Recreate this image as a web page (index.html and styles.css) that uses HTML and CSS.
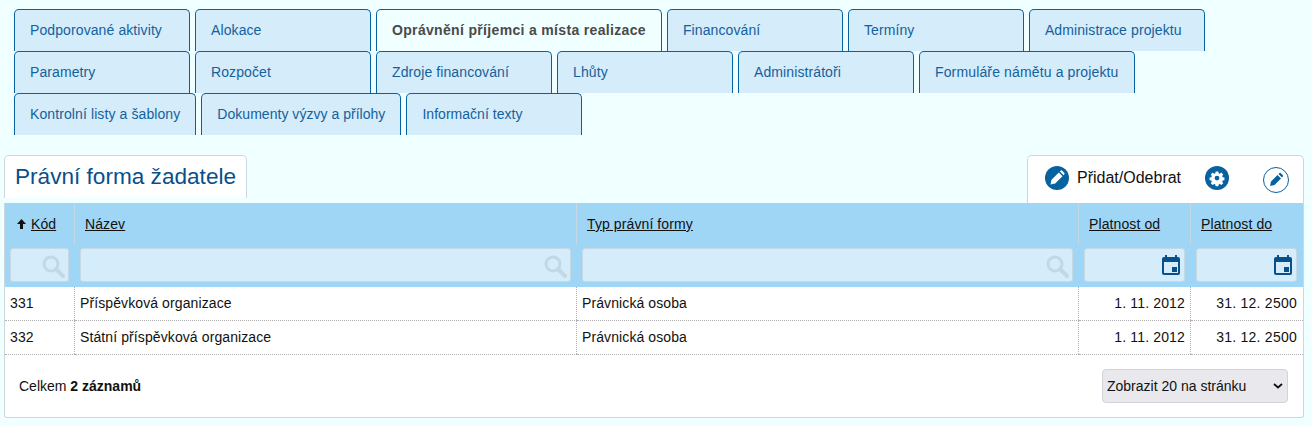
FILE: index.html
```html
<!DOCTYPE html>
<html lang="cs">
<head>
  <meta charset="UTF-8">
  <meta name="viewport" content="width=device-width, initial-scale=1.0">
  <title>Oprávnění příjemci a místa realizace</title>
  <link rel="stylesheet" href="styles.css">
</head>
<body>
  <nav class="tabs">
    <a class="tab">Podporované aktivity</a>
    <a class="tab">Alokace</a>
    <a class="tab active">Oprávnění příjemci a místa realizace</a>
    <a class="tab">Financování</a>
    <a class="tab">Termíny</a>
    <a class="tab">Administrace projektu</a>
    <a class="tab">Parametry</a>
    <a class="tab">Rozpočet</a>
    <a class="tab">Zdroje financování</a>
    <a class="tab">Lhůty</a>
    <a class="tab">Administrátoři</a>
    <a class="tab tab-wide">Formuláře námětu a projektu</a>
    <a class="tab">Kontrolní listy a šablony</a>
    <a class="tab tab-tight">Dokumenty výzvy a přílohy</a>
    <a class="tab tab-tight">Informační texty</a>
  </nav>

  <section class="panel">
    <div class="panel-top">
      <h2 class="panel-title">Právní forma žadatele</h2>
      <div class="toolbar">
        <span class="tool-add">
          <svg class="icon-round" viewBox="0 0 24 24" width="24" height="24">
            <circle cx="12" cy="12" r="12" fill="#08629f"/>
            <path d="M5.500 18.500l1-4.700 7.300-7.300 3.700 3.700-7.300 7.300zM14.800 5.500l.7-.7a1.200 1.200 0 0 1 1.700 0l2 2a1.200 1.200 0 0 1 0 1.700l-.7.7z" fill="#fff"/>
          </svg>
          Přidat/Odebrat
        </span>
        <svg class="icon-gear" viewBox="0 0 24 24" width="24" height="24">
          <circle cx="12" cy="12" r="12" fill="#08629f"/>
          <path fill="#fff" fill-rule="evenodd" d="M10.300 4.500h3.400l.4 2.200 1.400.6 1.900-1.300 2.400 2.400-1.300 1.900.6 1.400 2.200.4v3.400l-2.200.4-.6 1.400 1.300 1.900-2.400 2.400-1.900-1.300-1.400.6-.4 2.200h-3.400l-.4-2.200-1.400-.6-1.900 1.300-2.400-2.400 1.300-1.900-.6-1.400-2.200-.4v-3.400l2.200-.4.6-1.400-1.300-1.900 2.400-2.400 1.900 1.300 1.400-.6zM12 9.800a3 3 0 1 0 0 6 3 3 0 0 0 0-6z" transform="translate(2.400 1.800) scale(.8)"/>
        </svg>
        <svg class="icon-edit" viewBox="0 0 26 26" width="26" height="26">
          <circle cx="13" cy="13" r="12.500" fill="#fff" stroke="#08629f"/>
          <path d="M7 19l1-4.500 6.500-6.500 3.500 3.500-6.500 6.500zM15.500 7l.7-.7a1.200 1.200 0 0 1 1.700 0l1.800 1.800a1.200 1.200 0 0 1 0 1.700l-.7.700z" fill="#08629f"/>
        </svg>
      </div>
    </div>

    <table class="grid">
      <colgroup>
        <col class="col-code"><col class="col-name"><col class="col-type"><col class="col-from"><col class="col-to">
      </colgroup>
      <thead>
        <tr class="head-row">
          <th class="code-head"><svg class="sort-arrow" viewBox="0 0 9 10" width="9" height="10"><path d="M4.500 0L9 5H6v5H3V5H0z" fill="#111"/></svg><a>Kód</a></th>
          <th><a>Název</a></th>
          <th><a>Typ právní formy</a></th>
          <th><a>Platnost od</a></th>
          <th><a>Platnost do</a></th>
        </tr>
        <tr class="filter-row">
          <td><div class="filter"><svg class="search" viewBox="0 0 24 24" width="24" height="24"><circle cx="10" cy="10" r="7" fill="none" stroke="#c2d8e4" stroke-width="3"/><path d="M15 15l7 7" stroke="#c2d8e4" stroke-width="4" stroke-linecap="round"/></svg></div></td>
          <td><div class="filter"><svg class="search" viewBox="0 0 24 24" width="24" height="24"><circle cx="10" cy="10" r="7" fill="none" stroke="#c2d8e4" stroke-width="3"/><path d="M15 15l7 7" stroke="#c2d8e4" stroke-width="4" stroke-linecap="round"/></svg></div></td>
          <td><div class="filter"><svg class="search" viewBox="0 0 24 24" width="24" height="24"><circle cx="10" cy="10" r="7" fill="none" stroke="#c2d8e4" stroke-width="3"/><path d="M15 15l7 7" stroke="#c2d8e4" stroke-width="4" stroke-linecap="round"/></svg></div></td>
          <td><div class="filter"><svg class="calendar" viewBox="0 0 18 20" width="18" height="20"><path fill="#08508c" fill-rule="evenodd" d="M3 0h2v2h8V0h2v2h1a2 2 0 0 1 2 2v14a2 2 0 0 1-2 2H2a2 2 0 0 1-2-2V4a2 2 0 0 1 2-2h1zM2 7v11h14V7zM10 12h5v5h-5z"/></svg></div></td>
          <td><div class="filter"><svg class="calendar" viewBox="0 0 18 20" width="18" height="20"><path fill="#08508c" fill-rule="evenodd" d="M3 0h2v2h8V0h2v2h1a2 2 0 0 1 2 2v14a2 2 0 0 1-2 2H2a2 2 0 0 1-2-2V4a2 2 0 0 1 2-2h1zM2 7v11h14V7zM10 12h5v5h-5z"/></svg></div></td>
        </tr>
      </thead>
      <tbody>
        <tr>
          <td>331</td>
          <td>Příspěvková organizace</td>
          <td>Právnická osoba</td>
          <td class="date">1. 11. 2012</td>
          <td class="date-to">31. 12. 2500</td>
        </tr>
        <tr>
          <td>332</td>
          <td>Státní příspěvková organizace</td>
          <td>Právnická osoba</td>
          <td class="date">1. 11. 2012</td>
          <td class="date-to">31. 12. 2500</td>
        </tr>
      </tbody>
    </table>

    <div class="panel-foot">
      <span>Celkem <b>2 záznamů</b></span>
      <select class="page-size">
        <option>Zobrazit 20 na stránku</option>
      </select>
    </div>
  </section>
</body>
</html>
```

FILE: styles.css
```css
html, body {
  height: 100%;
}
body {
  margin: 0;
  padding: 9px 4px 0 4px;
  box-sizing: border-box;
  background-color: #f0ffff;
  font-family: "Liberation Sans", Arial, sans-serif;
  font-size: 14px;
  letter-spacing: 0.1px;
  color: #111;
  overflow: hidden;
}
.tabs {
  display: flex;
  flex-wrap: wrap;
  column-gap: 5px;
  padding-left: 10px;
  margin-bottom: 20px;
}
.tab {
  box-sizing: border-box;
  min-width: 176px;
  height: 42px;
  padding: 12px 15px 0 15px;
  background-color: #d5ecfb;
  border: 1px solid #08629f;
  border-bottom: none;
  border-radius: 5px 5px 0 0;
  color: #14619b;
  line-height: 16px;
  white-space: nowrap;
}
.tab.active {
  background-color: #f0ffff;
  color: #4a4a4a;
  font-weight: bold;
  letter-spacing: 0.33px;
}
.tab-tight {
  letter-spacing: 0.03px;
}
.tab-wide {
  letter-spacing: 0.14px;
}
.panel {
  box-sizing: border-box;
  width: 1300px;
  height: 263px;
  display: flex;
  flex-direction: column;
}
.panel-top {
  display: flex;
  justify-content: space-between;
  height: 48px;
}
.panel-title {
  box-sizing: border-box;
  height: 43px;
  margin: 0;
  padding: 7px 10px 0 10px;
  background-color: #fff;
  border: 1px solid #ccd8dd;
  border-bottom: none;
  border-radius: 5px 5px 0 0;
  color: #08508c;
  font-size: 22.600px;
  font-weight: normal;
  letter-spacing: 0;
  line-height: 28px;
}
.toolbar {
  box-sizing: border-box;
  width: 277px;
  display: flex;
  align-items: flex-start;
  padding: 10px 0 0 17px;
  background-color: #fff;
  border: 1px solid #ccd8dd;
  border-bottom: none;
  border-radius: 5px 5px 0 0;
}
.tool-add {
  display: flex;
  align-items: center;
  gap: 8px;
  font-size: 16px;
  letter-spacing: 0;
  color: #111;
  height: 24px;
}
.icon-gear {
  margin-left: 24px;
}
.icon-edit {
  margin: 1px 0 0 34px;
}
.grid {
  box-sizing: border-box;
  width: 1300px;
  table-layout: fixed;
  border-collapse: collapse;
  background-color: #fff;
  border-left: 1px solid #ccd8dd;
  border-right: 1px solid #ccd8dd;
}
.col-code { width: 70px; }
.col-to { width: 113px; }
.col-from { width: 112px; }
.col-name, .col-type { width: 502px; }
.grid th {
  height: 42px;
  padding: 0 10px;
  background-color: #9fd6f5;
  border-left: 1px solid #c4d8e4;
  font-weight: normal;
  text-align: left;
  vertical-align: middle;
}
.grid th:first-child, .grid td:first-child {
  border-left: none;
}
.grid th a {
  color: #111;
  text-decoration: underline;
}
.code-head {
  white-space: nowrap;
}
.sort-arrow {
  margin: 0 5px 0 2px;
}
.filter-row td {
  height: 42px;
  padding: 3px 6px 5px 5px;
  background-color: #9fd6f5;
  box-sizing: border-box;
  border-left: none;
}
.filter {
  box-sizing: border-box;
  height: 34px;
  display: flex;
  justify-content: flex-end;
  align-items: center;
  padding-right: 4px;
  background-color: #d5ecfb;
  border: 1px solid #c8d8e2;
  border-radius: 3px;
}
.search {
  margin: 1px -1px 0 0;
}
.grid tbody td {
  box-sizing: border-box;
  height: 34px;
  padding: 0 5px;
  border-left: 1px dotted #b0b0b0;
  border-bottom: 1px dotted #b0b0b0;
}
.grid tbody tr:first-child td {
  height: 33px;
  padding-bottom: 1px;
}
.grid td.date {
  padding-right: 5px;
  text-align: right;
  letter-spacing: 0.15px;
}
.grid td.date-to {
  padding-right: 6px;
  text-align: right;
  letter-spacing: 0.25px;
}
.panel-foot {
  box-sizing: border-box;
  flex: 1;
  display: flex;
  justify-content: space-between;
  align-items: center;
  padding: 0 15px 0 14px;
  background-color: #fff;
  border: 1px solid #ccd8dd;
  border-top: none;
  border-radius: 0 0 3px 3px;
  letter-spacing: 0;
}
.page-size {
  box-sizing: border-box;
  width: 186px;
  height: 34px;
  padding-left: 4px;
  appearance: none;
  background-color: #e8e8ed;
  background-image: url("data:image/svg+xml,%3Csvg xmlns='http://www.w3.org/2000/svg' width='10' height='6'%3E%3Cpath d='M1 1l4 3.500L9 1' fill='none' stroke='%23111' stroke-width='1.800'/%3E%3C/svg%3E");
  background-repeat: no-repeat;
  background-position: right 4px center;
  border: 1px solid #d0d4d8;
  border-radius: 4px;
  font-family: "Liberation Sans", Arial, sans-serif;
  font-size: 14px;
  color: #111;
}
```
